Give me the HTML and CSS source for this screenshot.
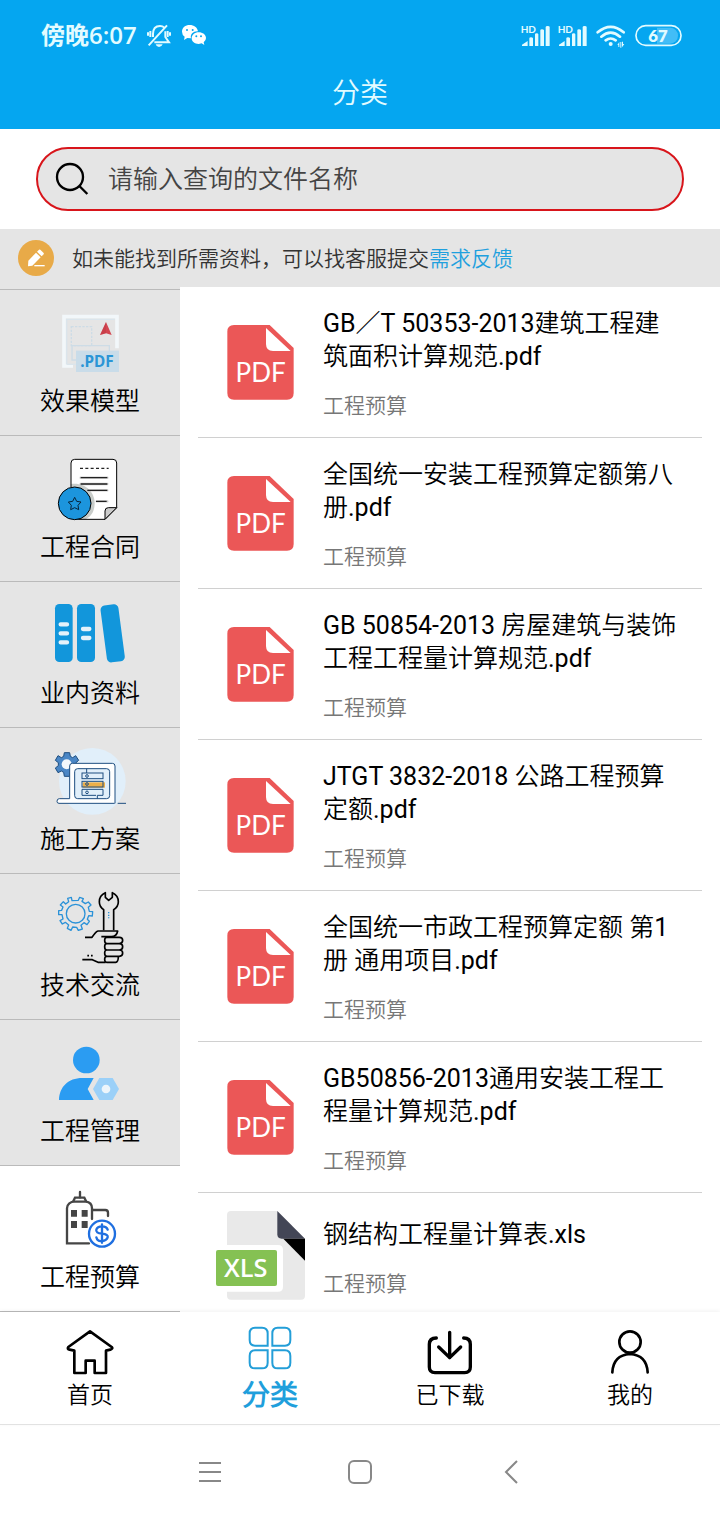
FILE: index.html
```html
<!DOCTYPE html>
<html lang="zh-CN">
<head>
<meta charset="utf-8">
<meta name="viewport" content="width=device-width, initial-scale=1">
<title>分类</title>
<link rel="stylesheet" href="styles.css">
</head>
<body>
<svg class="defs" aria-hidden="true">
  <symbol id="pdf" viewBox="75 87 270 270">
    <path fill="#eb5757" d="M129 105H236L308 174V309Q308 329 288 329H129Q109 329 109 309V125Q109 105 129 105Z"/>
    <path fill="#fff" d="M225 114L299 183H246Q225 183 225 162Z"/>
    <text class="pdf-text" x="209" y="276" text-anchor="middle">PDF</text>
  </symbol>
  <symbol id="signal" viewBox="120 66 96 75">
    <text class="hd-text" x="122" y="95">HD</text>
    <path fill="currentColor" d="M126 135V131L143 120V135ZM148 135V112Q148 109 153 109T159 112V135ZM165 135V100Q165 97 170 97T175 100V135ZM181 135V88Q181 85 186 85T192 88V135ZM197 135V78Q197 75 203 75T209 78V135Z"/>
  </symbol>
</svg>
<div class="app">
  <header class="top">
    <div class="status">
      <span class="time">傍晚6:07</span>
      <svg class="bell" viewBox="438 66 78 75" aria-hidden="true"><g fill="none" stroke="currentColor" stroke-width="6"><path d="M446 133L501 73M459 108V99Q459 75 480 75Q488 75 492 79M496 91V108L507 124H463"/><path d="M451 90V108M444 94V104M503 90V108M510 94V104"/></g><path fill="currentColor" d="M467 130H488Q485 138 477 138T467 130Z"/></svg>
      <svg class="wechat" viewBox="543 66 78 75" aria-hidden="true"><path fill="currentColor" d="M569 72C556 72 546 80 546 92Q546 101 554 107L552 117L562 111L573 112C570 100 580 90 594 91C592 79 582 72 569 72Z"/><path fill="currentColor" d="M596 94C584 94 575 102 575 112S584 129 596 129L605 127L613 132L611 124Q618 119 618 111C618 101 608 94 596 94Z"/><g fill="#05a6f0"><circle cx="561" cy="87" r="3"/><circle cx="578" cy="87" r="3"/><circle cx="589" cy="106" r="3"/><circle cx="603" cy="106" r="3"/></g></svg>
      <span class="spacer"></span>
      <svg class="signal" aria-hidden="true"><use href="#signal"/></svg>
      <svg class="signal" aria-hidden="true"><use href="#signal"/></svg>
      <svg class="wifi" viewBox="351 66 90 75" aria-hidden="true"><g fill="none" stroke="currentColor" stroke-width="8" stroke-linecap="round"><path d="M356 94Q395 61 434 94M367 107Q395 83 423 107M380 118Q395 107 410 118"/></g><circle cx="395" cy="129" r="6" fill="currentColor"/><path fill="currentColor" d="M415 132L421 123V138H418V132ZM424 123H427V140H424ZM429 122H432V129H436L429 139Z"/></svg>
      <svg class="battery" viewBox="468 66 141 75" aria-hidden="true"><rect x="480" y="80" width="117" height="48" rx="24" fill="#42bdf7"/><path d="M478 80H534V128H478Z" fill="#05a6f0"/><rect x="471" y="74" width="135" height="59" rx="29" fill="none" stroke="currentColor" stroke-width="5"/><text class="battery-text" x="537" y="122" text-anchor="middle">67</text></svg>
    </div>
    <h1 class="heading">分类</h1>
  </header>

  <form class="search" role="search">
    <label class="search-box">
      <svg class="search-icon" viewBox="162 93 108 108" aria-hidden="true"><g fill="none" stroke="#000" stroke-width="7"><circle cx="210" cy="141" r="39"/><path d="M238 168L262 192"/></g></svg>
      <input class="search-input" type="text" placeholder="请输入查询的文件名称" aria-label="请输入查询的文件名称">
    </label>
  </form>

  <div class="notice">
    <svg class="pencil" viewBox="54 330 108 108" aria-hidden="true"><circle cx="108" cy="384" r="54" fill="#e8aa48"/><path fill="#fff" d="M84 409L85 392L108 368L122 382L97 407ZM111 365L117 359Q119 358 121 359L131 369Q132 371 131 373L125 379Z"/><path stroke="#fff" stroke-width="4" d="M103 407H134"/></svg>
    <p class="notice-text">如未能找到所需资料，可以找客服提交<a class="link" href="#feedback">需求反馈</a></p>
  </div>

  <div class="content">
    <nav class="side" aria-label="分类">
      <a class="cat" href="#c1">
        <svg class="cat-icon" viewBox="135 63 270 216" aria-hidden="true"><path fill="none" stroke="#f2f7fa" stroke-width="11" d="M219 243H192V95H351V190"/><path fill="none" stroke="#dbe5ec" stroke-width="4" d="M200 238V103H344"/><path d="M200 238H228" stroke="#dbe5ec" stroke-width="4"/><rect x="214" y="125" width="61" height="57" fill="none" stroke="#cddce6" stroke-width="4" stroke-dasharray="7 4"/><path fill="none" stroke="#cddce6" stroke-width="4" d="M216 182V225H230M214 182H328V200"/><rect x="228" y="197" width="129" height="64" fill="#c9dce9"/><path fill="#d34550" d="M318 111L335 150L318 145L300 150Z"/><path fill="#b7323d" d="M318 111V145L300 150Z" opacity=".35"/><text class="dotpdf" x="291" y="246" text-anchor="middle">.PDF</text></svg>
        <span class="cat-name">效果模型</span>
      </a>
      <a class="cat" href="#c2">
        <svg class="cat-icon" viewBox="135 501 270 216" aria-hidden="true"><path fill="#fff" d="M223 523H339Q350 523 350 534V668L315 703H212V534Q212 523 223 523Z"/><path fill="#c9cdca" d="M212 597C250 590 284 617 284 655C284 680 272 696 256 703H212Z"/><path fill="none" stroke="#000" stroke-width="3" d="M213 606V534Q213 523 224 523H339Q350 523 350 534V668L315 703H224"/><path fill="#ccc" stroke="#000" stroke-width="3" d="M315 703V678Q315 668 325 668H350Z"/><path stroke="#9a9a9a" stroke-width="7" stroke-linecap="round" d="M242 578H322M242 597H322M266 616H322M290 649H322" opacity=".5"/><path stroke="#222" stroke-width="4" d="M242 578H322M242 597H322M262 616H322M288 649H320"/><path stroke="#222" stroke-width="4" stroke-dasharray="9 7" d="M240 550H326"/><circle cx="224" cy="655" r="49" fill="#1c95dd" stroke="#000" stroke-width="3"/><path fill="none" stroke="#07243a" stroke-width="3" stroke-linejoin="round" d="M224 637L230 649L243 651L234 661L236 674L224 668L212 674L214 661L205 651L218 649Z"/></svg>
        <span class="cat-name">工程合同</span>
      </a>
      <a class="cat" href="#c3">
        <svg class="cat-icon" viewBox="135 54 270 216" aria-hidden="true"><g fill="#1296db"><rect x="165" y="72" width="53" height="174" rx="13"/><rect x="231" y="72" width="54" height="174" rx="13"/><rect x="311" y="74" width="54" height="172" rx="13" transform="rotate(-7.5 338 160)"/></g><path stroke="#e5f2fa" stroke-width="13" stroke-linecap="round" d="M182 133H201M182 160H201M182 187H201M249 147H268M249 174H268"/></svg>
        <span class="cat-name">业内资料</span>
      </a>
      <a class="cat" href="#c4">
        <svg class="cat-icon" viewBox="135 492 270 216" aria-hidden="true"><circle cx="277" cy="604" r="100" fill="#e1effa"/><path fill="#4a86c5" stroke="#1e4e80" stroke-width="3" stroke-linejoin="round" d="M193 518H209L211 529L218 533L227 527L236 541L228 548V557L236 563L227 578L217 573L211 577L209 589H193L191 577L184 573L174 578L166 564L175 557V548L166 541L174 527L184 533L191 529Z"/><circle cx="200" cy="553" r="15" fill="#f3f7fb"/><path fill="#fff" stroke="#1e4e80" stroke-width="3" d="M344 670H177Q171 670 171 664Q171 656 178 656H209V558Q209 550 217 550H337Q345 550 345 558V670"/><path d="M353 670H378" stroke="#1e4e80" stroke-width="3"/><rect x="224" y="566" width="105" height="90" rx="9" fill="#e1effa" stroke="#1e4e80" stroke-width="3"/><path fill="#edb04a" d="M248 607H315V623H248Z"/><g fill="none" stroke="#1e4e80" stroke-width="3"><rect x="246" y="579" width="63" height="17"/><rect x="246" y="604" width="63" height="17"/><path d="M288 646H246V628H309V646H292V656M260 566V579"/><circle cx="261" cy="588" r="4"/><circle cx="261" cy="612" r="4"/><circle cx="261" cy="637" r="4"/></g></svg>
        <span class="cat-name">施工方案</span>
      </a>
      <a class="cat" href="#c5">
        <svg class="cat-icon" viewBox="135 60 270 216" aria-hidden="true"><g fill="none" stroke="#2b92d8" stroke-width="4" stroke-linejoin="round"><path d="M216 92L214 82L203 85L206 95L197 102L190 95L181 105L189 111L185 121L176 122V134L186 134L189 147L180 152L187 162L196 157L206 165L202 175L213 181L218 171L230 172L235 181L247 177L243 166L252 158L261 164L268 154L262 148L266 137L277 138L278 125L268 124L265 112L273 105L265 96L256 101L246 94L250 86L239 82L235 91Z"/><circle cx="227" cy="131" r="28"/></g><g fill="none" stroke="#000" stroke-width="5" stroke-linejoin="round"><path d="M311 181V119Q298 110 298 95Q298 76 316 68V82L326 91L337 82V68Q355 76 355 95Q355 110 341 119V181"/><path d="M255 202H276Q288 184 294 183H353Q350 200 334 200H304M247 269H277L294 277H317"/><path d="M320 202H358Q368 202 368 211T358 221H320Q314 220 314 211T320 202ZM320 221H358Q368 221 368 230T358 240H320Q314 239 314 230T320 221ZM320 240H358Q368 240 368 249T358 259H320Q314 258 314 249T320 240ZM320 259H355Q355 277 347 277H320Q314 277 314 268T320 259Z"/><path stroke-dasharray="5 6" d="M262 257H278"/></g><path fill="none" stroke="#2b92d8" stroke-width="4" stroke-dasharray="4 4" d="M326 126V145"/></svg>
        <span class="cat-name">技术交流</span>
      </a>
      <a class="cat" href="#c6">
        <svg class="cat-icon" viewBox="135 498 270 216" aria-hidden="true"><g fill="#2b9cf2"><circle cx="259" cy="570" r="40"/><path d="M177 690C178 651 204 624 247 624H281L263 657L281 690Z"/></g><path fill="#9bd0f8" d="M298 624H338L357 657L338 690H298L279 657Z"/><circle cx="318" cy="657" r="13" fill="#edf5fb"/></svg>
        <span class="cat-name">工程管理</span>
      </a>
      <a class="cat cat-active" href="#c7" aria-current="true">
        <svg class="cat-icon" viewBox="135 66 270 216" aria-hidden="true"><g fill="none" stroke="#454545" stroke-width="7"><path stroke-linecap="round" d="M267 250H201V145Q201 136 208 130Q215 125 222 125H257Q276 127 276 145V177M276 150H316Q324 150 324 158V168M240 96V112"/><path d="M219 125L225 113H253L259 125"/></g><path fill="#454545" d="M213 150H231V170H213ZM245 150H263V170H245ZM213 183H231V204H213ZM245 183H263V204H245Z"/><circle cx="306" cy="221" r="45" fill="#fff"/><circle cx="306" cy="221" r="39" fill="#fff" stroke="#1f6fe0" stroke-width="7"/><path fill="none" stroke="#1f6fe0" stroke-width="7" stroke-linecap="round" d="M306 193V248M323 209Q320 199 306 199T289 209T306 221T323 232T306 243T289 232"/></svg>
        <span class="cat-name">工程预算</span>
      </a>
    </nav>

    <main class="files">
      <article class="file"><svg class="file-icon" aria-hidden="true"><use href="#pdf"/></svg><div class="file-body"><h2 class="file-title">GB／T 50353-2013建筑工程建筑面积计算规范.pdf</h2><p class="file-tag">工程预算</p></div></article>
      <article class="file"><svg class="file-icon" aria-hidden="true"><use href="#pdf"/></svg><div class="file-body"><h2 class="file-title">全国统一安装工程预算定额第八册.pdf</h2><p class="file-tag">工程预算</p></div></article>
      <article class="file"><svg class="file-icon" aria-hidden="true"><use href="#pdf"/></svg><div class="file-body"><h2 class="file-title">GB 50854-2013 房屋建筑与装饰工程工程量计算规范.pdf</h2><p class="file-tag">工程预算</p></div></article>
      <article class="file"><svg class="file-icon" aria-hidden="true"><use href="#pdf"/></svg><div class="file-body"><h2 class="file-title">JTGT 3832-2018 公路工程预算定额.pdf</h2><p class="file-tag">工程预算</p></div></article>
      <article class="file"><svg class="file-icon" aria-hidden="true"><use href="#pdf"/></svg><div class="file-body"><h2 class="file-title">全国统一市政工程预算定额 第1册 通用项目.pdf</h2><p class="file-tag">工程预算</p></div></article>
      <article class="file"><svg class="file-icon" aria-hidden="true"><use href="#pdf"/></svg><div class="file-body"><h2 class="file-title">GB50856-2013通用安装工程工程量计算规范.pdf</h2><p class="file-tag">工程预算</p></div></article>
      <article class="file"><svg class="file-icon" viewBox="648 159 270 270" aria-hidden="true"><path fill="#e9e9e9" d="M693 153H832L915 236V407Q915 419 903 419H693Q681 419 681 407V165Q681 153 693 153Z"/><path fill="#fff" d="M681 255H834Q849 255 849 270V380Q849 395 834 395H681Z"/><path fill="#434656" d="M832 153L915 236H845Q832 236 832 223Z"/><path d="M850 236H915V302Z"/><rect x="648" y="270" width="183" height="108" rx="6" fill="#85c153"/><text class="xls-text" x="737" y="352" text-anchor="middle">XLS</text></svg><div class="file-body"><h2 class="file-title">钢结构工程量计算表.xls</h2><p class="file-tag">工程预算</p></div></article>
    </main>
  </div>

  <nav class="tabs" aria-label="主导航">
    <a class="tab" href="#home"><svg class="tab-icon" viewBox="198 57 144 156" aria-hidden="true"><path fill="none" stroke="#000" stroke-width="8" stroke-linejoin="round" d="M270 79L205 126Q201 133 209 134L223 137V204H257V167H284V204H318V137L331 134Q340 131 335 126Z"/></svg><span class="tab-name">首页</span></a>
    <a class="tab tab-active" href="#category" aria-current="page"><svg class="tab-icon" viewBox="738 57 144 156" aria-hidden="true"><g fill="none" stroke="#239ed8" stroke-width="6"><path d="M765 68H786Q803 68 803 85V122H765Q749 122 749 105V85Q749 68 765 68ZM833 68H855Q871 68 871 85V105Q871 122 855 122H817V85Q817 68 833 68ZM765 136H803V173Q803 190 786 190H765Q749 190 749 173V153Q749 136 765 136ZM817 136H855Q871 136 871 153V173Q871 190 855 190H833Q817 190 817 173Z"/></g></svg><span class="tab-name">分类</span></a>
    <a class="tab" href="#downloads"><svg class="tab-icon" viewBox="198 57 144 156" aria-hidden="true"><g fill="none" stroke="#000" stroke-width="10" stroke-linecap="round" stroke-linejoin="round"><path d="M229 99Q208 99 208 118V186Q208 203 225 203H314Q331 203 331 186V118Q331 99 311 99"/><path d="M269 82V158M236 126L269 158L302 126"/></g></svg><span class="tab-name">已下载</span></a>
    <a class="tab" href="#me"><svg class="tab-icon" viewBox="738 57 144 156" aria-hidden="true"><g fill="none" stroke="#000" stroke-width="8" stroke-linecap="round"><circle cx="810" cy="111" r="32"/><path d="M757 202Q760 150 810 147Q860 150 863 202"/></g></svg><span class="tab-name">我的</span></a>
  </nav>

  <div class="system">
    <button class="sys" type="button" aria-label="菜单"><svg class="sys-icon" viewBox="0 0 36 36"><path d="M7 9H29M7 18H29M7 27H29"/></svg></button>
    <button class="sys" type="button" aria-label="主屏幕"><svg class="sys-icon" viewBox="0 0 36 36"><rect x="7" y="7" width="22" height="22" rx="5"/></svg></button>
    <button class="sys" type="button" aria-label="返回"><svg class="sys-icon" viewBox="0 0 36 36"><path d="M25 7L14 18L25 29"/></svg></button>
  </div>
</div>
</body>
</html>
```
FILE: styles.css
```css
* {
  box-sizing: border-box;
}

body {
  margin: 0;
  background: #fff;
  color: #000;
  font-family: Roboto, "Noto Sans CJK SC DemiLight", "Noto Sans CJK SC", sans-serif;
  font-weight: 400;
}

h1, h2, p {
  margin: 0;
  font-weight: inherit;
}

a {
  color: inherit;
  text-decoration: none;
}

svg {
  display: block;
  flex: none;
}

.defs {
  display: none;
}

.app {
  display: flex;
  flex-direction: column;
  height: 100vh;
}

/* Header */
.top {
  background: #05a6f0;
  color: #e2fbff;
}

.status {
  display: flex;
  align-items: center;
  height: 70px;
  padding: 0 38px 0 41px;
}

.time {
  margin-right: 9px;
  font: 600 24px/32px "Open Sans", "Noto Sans CJK SC", sans-serif;
}

.bell,
.wechat {
  width: 26px;
  height: 25px;
}

.bell {
  margin-right: 9px;
}

.wechat {
  color: #fff;
}

.spacer {
  flex: 1;
}

.signal {
  width: 32px;
  height: 25px;
  margin-right: 5px;
}

.wifi {
  width: 30px;
  height: 25px;
  margin-right: 9px;
  margin-left: 2px;
}

.battery {
  width: 47px;
  height: 25px;
}

.hd-text {
  fill: currentColor;
  font: 700 30px Lato, sans-serif;
}

.battery-text {
  fill: currentColor;
  font: 800 50px Lato, sans-serif;
}

.heading {
  padding: 2px 0 13px;
  font-size: 28px;
  line-height: 44px;
  text-align: center;
}

/* Search */
.search {
  padding: 18px 36px;
}

.search-box {
  display: flex;
  align-items: center;
  gap: 18px;
  height: 64px;
  padding: 0 16px;
  border: 2px solid #d8151b;
  border-radius: 32px;
  background: #e5e5e5;
}

.search-icon {
  width: 36px;
  height: 36px;
}

.search-input {
  flex: 1;
  min-width: 0;
  padding: 2px 0 0;
  border: 0;
  outline: 0;
  background: none;
  font: inherit;
  font-size: 25px;
  line-height: 36px;
}

.search-input::placeholder {
  color: #444;
  opacity: 1;
}

/* Notice */
.notice {
  display: flex;
  align-items: center;
  gap: 18px;
  height: 58px;
  padding: 0 18px;
  background: #e5e5e5;
}

.pencil {
  width: 36px;
  height: 36px;
}

.notice-text {
  padding-top: 2px;
  color: #333;
  font-size: 21px;
  line-height: 30px;
}

.link {
  color: #1fa0de;
}

/* Content */
.content {
  display: flex;
  flex: 1;
  min-height: 0;
  overflow: hidden;
}

.side {
  width: 25%;
  padding-top: 2px;
  background: #e5e5e5;
}

.cat {
  display: flex;
  flex-direction: column;
  align-items: center;
  gap: 6px;
  padding: 16px 0 15px;
  border-bottom: 1px solid #bababa;
}

.cat:first-child {
  border-top: 1px solid #bababa;
}

.cat-active {
  background: #fff;
}

.cat-icon {
  width: 90px;
  height: 72px;
  overflow: visible;
}

.cat-name {
  font-size: 25px;
  line-height: 36px;
}

.dotpdf {
  fill: #2b95d6;
  font: 700 46px "Noto Sans", sans-serif;
}

.files {
  flex: 1;
  min-width: 0;
  padding: 0 18px;
}

.file {
  display: flex;
  align-items: center;
  gap: 17px;
  padding: 20px 20px 16px 18px;
  border-bottom: 1px solid #d0d0d0;
}

.file-icon {
  width: 90px;
  height: 90px;
  overflow: visible;
}

.file-body {
  flex: 1;
  min-width: 0;
}

.file-title {
  margin-bottom: 18px;
  font-size: 25px;
  line-height: 33px;
}

.file-tag {
  color: #777;
  font-size: 21px;
  line-height: 30px;
}

.pdf-text {
  fill: #fff;
  font: 400 78px Lato, sans-serif;
}

.xls-text {
  fill: #fff;
  font: 600 76px "Open Sans", sans-serif;
}

/* Bottom tabs */
.tabs {
  position: relative;
  display: flex;
  background: #fff;
  border-bottom: 1px solid #e2e2e2;
  box-shadow: 0 -1px 4px rgba(0, 0, 0, 0.06);
}

.tab {
  display: flex;
  flex: 1;
  flex-direction: column;
  align-items: center;
  gap: 2px;
  padding: 12px 0 10px;
}

.tab-icon {
  width: 48px;
  height: 52px;
}

.tab-name {
  font-size: 23px;
  line-height: 36px;
}

.tab-active .tab-name {
  color: #1f9fdc;
  font-size: 28px;
  font-weight: 700;
}

/* System navigation */
.system {
  display: flex;
  align-items: center;
  justify-content: center;
  gap: 114px;
  height: 95px;
  padding-bottom: 2px;
  background: #fff;
}

.sys {
  padding: 0;
  border: 0;
  background: none;
}

.sys-icon {
  width: 36px;
  height: 36px;
  fill: none;
  stroke: #888;
  stroke-width: 2;
}
```
